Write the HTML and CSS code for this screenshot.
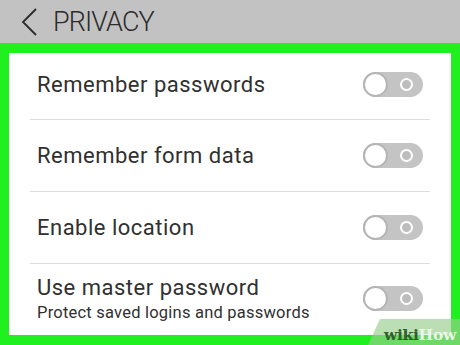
FILE: index.html
```html
<!DOCTYPE html>
<html>
<head>
<meta charset="utf-8">
<link rel="stylesheet" href="styles.css">
</head>
<body>
<div class="header">
  <svg class="back" width="18" height="30" viewBox="0 0 18 30"><path d="M16 2 L3 15 L16 28" fill="none" stroke="#2a2a2a" stroke-width="1.8"/></svg>
  <span class="title">PRIVACY</span>
</div>
<div class="frame">
  <div class="panel">
    <div class="row first">
      <div class="label"><div class="name">Remember passwords</div></div>
      <div class="toggle"><span class="knob"></span><span class="ring"></span></div>
    </div>
    <div class="row">
      <div class="label"><div class="name">Remember form data</div></div>
      <div class="toggle"><span class="knob"></span><span class="ring"></span></div>
    </div>
    <div class="row">
      <div class="label"><div class="name">Enable location</div></div>
      <div class="toggle"><span class="knob"></span><span class="ring"></span></div>
    </div>
    <div class="row last">
      <div class="label"><div class="name">Use master password</div><div class="sub">Protect saved logins and passwords</div></div>
      <div class="toggle"><span class="knob"></span><span class="ring"></span></div>
    </div>
  </div>
  <div class="wm"><span class="wiki">wiki</span><span class="how">How</span></div>
</div>
</body>
</html>
```
FILE: styles.css
```css
html, body { margin: 0; padding: 0; }
body { width: 460px; height: 345px; overflow: hidden; font-family: Roboto, "Noto Sans", sans-serif; background: #20f020; }
.header { height: 43px; background: #c2c2c2; display: flex; align-items: center; padding-left: 20px; box-sizing: border-box; }
.back { display: block; margin-top: 1px; }
.title { margin-left: 15px; font-size: 27px; font-weight: 300; color: #2b2b2b; letter-spacing: -0.9px; margin-top: 1px; }
.frame { position: relative; background: #20f020; padding: 10px 9px; height: 302px; box-sizing: border-box; }
.panel { background: #fff; height: 282px; padding: 0 21px; box-sizing: border-box; }
.row { height: 72px; border-top: 1px solid #dcdcdc; box-sizing: border-box; display: flex; align-items: center; justify-content: space-between; padding: 0 7px; }
.row.first { height: 66px; border-top: none; padding-bottom: 3px; }
.row.last { padding-bottom: 2px; }
.name { font-size: 22px; color: #303030; letter-spacing: 0.5px; }
.sub { font-size: 16.5px; color: #303030; margin-top: 3px; letter-spacing: 0.22px; }
.toggle { position: relative; width: 60px; height: 25px; border-radius: 13px; background: #c4c4c4; box-sizing: border-box; }
.knob { position: absolute; left: 0; top: 0; width: 25px; height: 25px; border-radius: 50%; background: #fff; border: 2px solid #b5b5b5; box-sizing: border-box; }
.ring { position: absolute; left: 37px; top: 6px; width: 13px; height: 13px; border-radius: 50%; background: #bdbdbd; border: 2px solid #fff; box-sizing: border-box; }
.wm { position: absolute; right: 0; bottom: 0; width: 92px; height: 26px; background: rgba(150, 205, 140, 0.65); clip-path: polygon(12px 0, 100% 0, 100% 100%, 0 100%); font-family: "DejaVu Serif", serif; font-weight: bold; font-size: 15.5px; line-height: 20px; padding-top: 6px; text-align: right; padding-right: 4px; box-sizing: border-box; letter-spacing: -0.3px; }
.wiki { color: #2f5f2a; }
.how { color: #eaf7e8; }
```
